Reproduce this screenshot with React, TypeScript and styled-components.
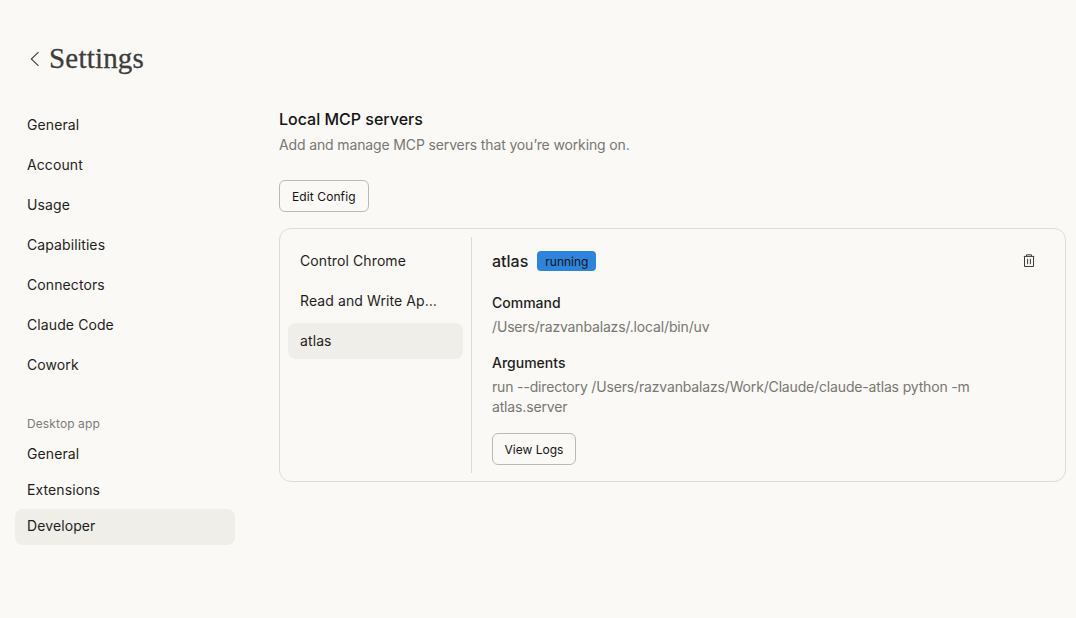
import React from "react";
import styled, { createGlobalStyle } from "styled-components";

const Global = createGlobalStyle`
  html, body { margin: 0; padding: 0; background: #faf9f5; }
  body { font-family: Inter, "Liberation Sans", sans-serif; color: #141413; width: 1076px; height: 618px; overflow: hidden; }
  * { box-sizing: border-box; }
`;

const Page = styled.div`
  width: 1076px;
  height: 618px;
  background: #faf9f5;
  padding: 40px 10px 0 15px;
`;

const Header = styled.header`
  display: flex;
  align-items: center;
  height: 36px;
  padding-left: 13px;
  gap: 7px;
  color: #3d3d3a;
`;

const BackGlyph = styled.svg`
  margin-top: 2px;
`;

const Title = styled.h1`
  margin: 0;
  font-family: "Liberation Serif", serif;
  font-weight: 400;
  font-size: 29px;
  line-height: 36px;
  letter-spacing: 0.2px;
  -webkit-text-stroke: 0.3px #3d3d3a;
`;

const Columns = styled.div`
  display: flex;
  margin-top: 31px;
`;

const Sidebar = styled.nav`
  width: 220px;
  margin-right: 44px;
  display: flex;
  flex-direction: column;
`;

const NavGroup = styled.div<{ $gap: number }>`
  display: flex;
  flex-direction: column;
  gap: ${(p) => p.$gap}px;
`;

const NavItem = styled.div<{ $active?: boolean }>`
  height: 36px;
  padding: 0 12px 2px;
  display: flex;
  align-items: center;
  border-radius: 8px;
  font-size: 14px;
  letter-spacing: 0.1px;
  color: #1f1e1d;
  background: ${(p) => (p.$active ? "#f0eee8" : "transparent")};
`;

const DesktopItem = styled(NavItem)`
  padding-bottom: 4px;
`;

const NavLabel = styled.div`
  margin: 30px 0 3px;
  height: 21px;
  padding-left: 12px;
  display: flex;
  align-items: center;
  font-size: 12px;
  letter-spacing: 0.1px;
  color: #7d7c78;
`;

const Main = styled.main`
  flex: 1;
  padding-top: 1px;
`;

const SectionTitle = styled.h2`
  margin: 0;
  font-size: 16px;
  line-height: 22px;
  font-weight: 500;
  color: #141413;
`;

const SectionText = styled.p`
  margin: 5px 0 0;
  font-size: 14px;
  line-height: 20px;
  letter-spacing: -0.135px;
  color: #787771;
`;

const Button = styled.button`
  display: block;
  height: 32px;
  padding: 0 12px;
  background: transparent;
  border: 1px solid #bab9b3;
  border-radius: 6px;
  font-family: inherit;
  font-size: 12px;
  font-weight: 400;
  letter-spacing: 0.1px;
  color: #141413;
`;

const EditButton = styled(Button)`
  margin-top: 25px;
`;

const Card = styled.section`
  margin-top: 16px;
  height: 254px;
  display: flex;
  padding: 8px 0;
  border: 1px solid #dedcd5;
  border-radius: 12px;
`;

const ServerList = styled.div`
  width: 192px;
  flex: none;
  padding: 6px 8px 0;
  border-right: 1px solid #dedcd5;
  display: flex;
  flex-direction: column;
  gap: 4px;
`;

const ServerItem = styled(NavItem)`
  width: 175px;
  flex: none;
  display: block;
  padding: 0 22px 0 12px;
  line-height: 36px;
  white-space: nowrap;
  overflow: hidden;
  text-overflow: ellipsis;
`;

const Detail = styled.div`
  flex: 1;
  padding: 14px 20px 0;
`;

const DetailHead = styled.div`
  display: flex;
  align-items: center;
  height: 20px;
`;

const ServerName = styled.span`
  font-size: 16px;
  font-weight: 500;
  color: #1f1e1d;
`;

const Badge = styled.span`
  margin-left: 9px;
  height: 20px;
  padding: 0 8px;
  display: inline-flex;
  align-items: center;
  border-radius: 4px;
  background: #2c84db;
  font-size: 12px;
  color: #141413;
`;

const TrashButton = styled.span`
  margin-left: auto;
  margin-right: 9px;
  display: flex;
  color: #3d3d3a;
`;

const FieldLabel = styled.div<{ $top: number }>`
  margin-top: ${(p) => p.$top}px;
  font-size: 14px;
  line-height: 20px;
  font-weight: 500;
  color: #1f1e1d;
`;

const FieldValue = styled.div`
  margin-top: 4px;
  max-width: 500px;
  font-size: 14px;
  line-height: 20px;
  letter-spacing: -0.16px;
  color: #787771;
`;

const LogsButton = styled(Button)`
  margin-top: 16px;
  padding: 0 11.5px;
  letter-spacing: 0;
`;

function BackIcon() {
  return (
    <BackGlyph width="14" height="18" viewBox="0 0 14 18" fill="none" stroke="currentColor" strokeWidth="1.1">
      <path d="M10.5 2.2 3.3 9l7.2 6.8" />
    </BackGlyph>
  );
}

function TrashIcon() {
  return (
    <svg width="14" height="14" viewBox="0 0 14 14" fill="none" stroke="currentColor" strokeWidth="1">
      <path d="M1.8 2.4h10.4M2.5 2.4v10.1h9V2.4M4.5 2.4V.8h5v1.6M5.6 4.8v5.4M8.4 4.8v5.4" />
    </svg>
  );
}

export default function App() {
  return (
    <Page>
      <Global />
      <Header>
        <BackIcon />
        <Title>Settings</Title>
      </Header>
      <Columns>
        <Sidebar>
          <NavGroup $gap={4}>
            {["General", "Account", "Usage", "Capabilities", "Connectors", "Claude Code", "Cowork"].map((n) => (
              <NavItem key={n}>{n}</NavItem>
            ))}
          </NavGroup>
          <NavLabel>Desktop app</NavLabel>
          <NavGroup $gap={0}>
            <DesktopItem>General</DesktopItem>
            <DesktopItem>Extensions</DesktopItem>
            <DesktopItem $active>Developer</DesktopItem>
          </NavGroup>
        </Sidebar>
        <Main>
          <SectionTitle>Local MCP servers</SectionTitle>
          <SectionText>Add and manage MCP servers that you’re working on.</SectionText>
          <EditButton>Edit Config</EditButton>
          <Card>
            <ServerList>
              <ServerItem>Control Chrome</ServerItem>
              <ServerItem>Read and Write Apple Notes</ServerItem>
              <ServerItem $active>atlas</ServerItem>
            </ServerList>
            <Detail>
              <DetailHead>
                <ServerName>atlas</ServerName>
                <Badge>running</Badge>
                <TrashButton>
                  <TrashIcon />
                </TrashButton>
              </DetailHead>
              <FieldLabel $top={22}>Command</FieldLabel>
              <FieldValue>/Users/razvanbalazs/.local/bin/uv</FieldValue>
              <FieldLabel $top={16}>Arguments</FieldLabel>
              <FieldValue>run --directory /Users/razvanbalazs/Work/Claude/claude-atlas python -m atlas.server</FieldValue>
              <LogsButton>View Logs</LogsButton>
            </Detail>
          </Card>
        </Main>
      </Columns>
    </Page>
  );
}
